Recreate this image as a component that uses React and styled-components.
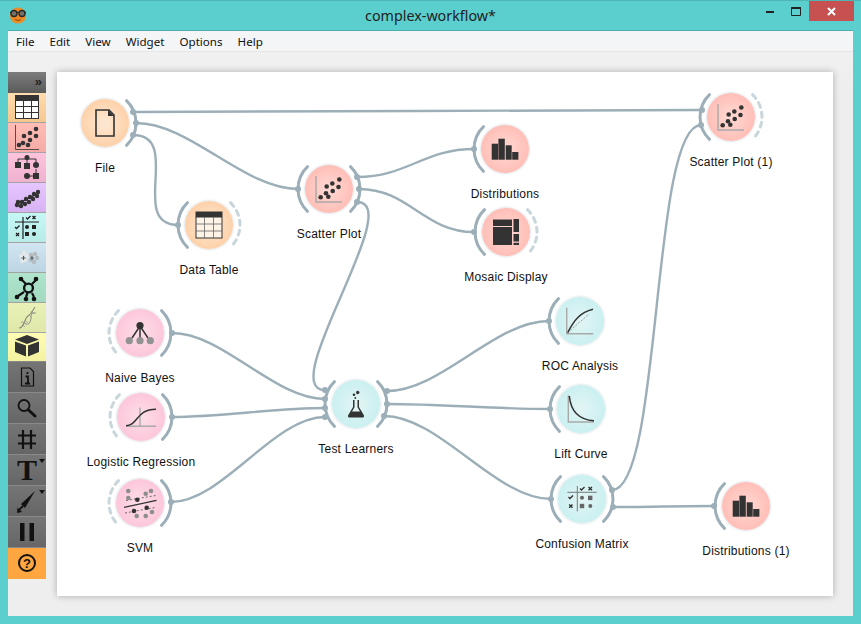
import React from 'react'
import styled, { createGlobalStyle } from 'styled-components'

const GlobalStyle = createGlobalStyle`
    html, body {
        margin: 0;
        padding: 0;
        background: #5bcfce;
    }
    * {
        box-sizing: border-box;
    }
`

const LINK = '#9cafb8'
const DASH = '#c9d6db'
const DARK = '#333333'
const GREY = '#a9a9a9'

const HUES = {
    orange: ['#fde6cf', '#fdc797'],
    red: ['#ffd6d0', '#ffb3ab'],
    pink: ['#fddbe7', '#fcbdd4'],
    cyan: ['#e0f4f4', '#c0eeee'],
}

function Dots({ points, r = 2.3, fill = DARK }) {
    return points.map(([x, y], i) => <circle key={i} cx={x} cy={y} r={r} fill={fill} />)
}

function FileGlyph() {
    return (
        <>
            <path d="M-9 -13 H4 L9 -8 V13 H-9 Z" fill="none" stroke={DARK} strokeWidth="1.6" />
            <path d="M3 -13 L9 -7 H3 Z" fill={DARK} />
        </>
    )
}

function TableGlyph() {
    return (
        <>
            <rect x="-13" y="-13" width="26" height="26" fill="#fdf3e6" stroke={DARK} strokeWidth="1" />
            <rect x="-13" y="-13" width="26" height="5.5" fill={DARK} />
            <path d="M-4.5 -8 V13 M4.5 -8 V13 M-13 -1 H13 M-13 6 H13" stroke="#666" strokeWidth="0.8" fill="none" />
        </>
    )
}

function ScatterGlyph() {
    return (
        <>
            <path d="M-13 -13 V13 H13" fill="none" stroke={GREY} strokeWidth="1.4" />
            <Dots points={[[10.3, -9.5], [3.3, -5.5], [-2.3, -2.5], [9.5, -2], [3.7, 2], [-3, 4.3], [-8.3, 8.3], [-0.7, 7.7]]} />
        </>
    )
}

function BarsGlyph() {
    return (
        <g fill={DARK}>
            <rect x="-13.3" y="-5.3" width="6.4" height="16" />
            <rect x="-6.6" y="-10.3" width="6.4" height="21" />
            <rect x="0.7" y="-3.7" width="6" height="14.4" />
            <rect x="7.2" y="3" width="6.2" height="7.7" />
        </g>
    )
}

function MosaicGlyph() {
    return (
        <g fill={DARK}>
            <rect x="-13" y="-12.5" width="19" height="6.5" />
            <rect x="-13" y="-5" width="19" height="18" />
            <rect x="7.5" y="-13" width="5.5" height="13" />
            <rect x="7.5" y="2" width="5.5" height="7.5" />
            <rect x="7.5" y="10.8" width="5.5" height="2.2" />
        </g>
    )
}

function BayesGlyph() {
    return (
        <>
            <path d="M0 -7 L-8 5 M0 -7 V5 M0 -7 L8 5" stroke={DARK} strokeWidth="1.5" fill="none" />
            <Dots points={[[0, -7.5]]} r={3.6} />
            <Dots points={[[-10.7, 7.7], [0, 7.7], [10.3, 7.7]]} r={3.6} fill="#929292" />
        </>
    )
}

function LogisticGlyph() {
    return (
        <>
            <path d="M-1 -9.5 V9.3 M-15 9.3 H15" stroke={GREY} strokeWidth="1.4" fill="none" />
            <path d="M-15 8.7 C-3 8.7 -5 -7.7 15 -7.7" stroke={DARK} strokeWidth="1.5" fill="none" />
        </>
    )
}

function SvmGlyph() {
    return (
        <>
            <path d="M-16 4.3 L16.5 -2.7" stroke={DARK} strokeWidth="1.2" />
            <path d="M-14 -2.5 L16 -7.5 M-15 10 L15 4.5" stroke={DARK} strokeWidth="0.7" strokeDasharray="2 2" />
            <Dots points={[[-11.7, -12], [-11.7, -5], [11, -12], [5.7, -9.3], [-3.3, 13], [5.7, 13], [12, 9]]} fill="#8d8d8d" />
            <Dots points={[[-2.7, -3.3], [6.7, 4.7], [-6, 8]]} />
        </>
    )
}

function FlaskGlyph() {
    return (
        <>
            <path d="M-3 -4 H3 V3 L8 11.5 Q8.5 13.5 6 13.5 H-6 Q-8.5 13.5 -8 11.5 L-3 3 Z" fill={DARK} />
            <path d="M-1.5 -4 V3.2 L-4 7.5 H4 L1.5 3.2 V-4 Z" fill="#e0f4f4" />
            <Dots points={[[1.7, -11.5]]} r={1.7} />
            <Dots points={[[-2, -9.3]]} r={1.3} />
            <Dots points={[[-0.7, -6]]} r={0.9} />
        </>
    )
}

function RocGlyph() {
    return (
        <>
            <path d="M-13.3 -13.3 V12.7 H13.3" stroke={GREY} strokeWidth="1.4" fill="none" />
            <path d="M-12.3 11.7 L9 -7" stroke="#777" strokeWidth="0.7" strokeDasharray="2 1.5" />
            <path d="M-12.3 11.7 C-6 -1 0 -8.5 13 -11.7" stroke={DARK} strokeWidth="1.5" fill="none" />
        </>
    )
}

function LiftGlyph() {
    return (
        <>
            <path d="M-12.7 -13.7 V13 H13" stroke={GREY} strokeWidth="1.4" fill="none" />
            <path d="M-11.7 -13 C-10 4 0 11 13 11.7" stroke={DARK} strokeWidth="1.5" fill="none" />
        </>
    )
}

function MatrixGlyph() {
    return (
        <>
            <path d="M-4.7 -13 V12.3 M-14.7 -6.7 H14.7" stroke="#777" strokeWidth="1" />
            <path d="M-2 -10.5 L-0.5 -9 L2.5 -12 M-13.5 -2 L-12 -0.5 L-9 -3.5" stroke={DARK} strokeWidth="1.4" fill="none" />
            <path d="M6.5 -12 L10 -8.8 M10 -12 L6.5 -8.8 M-12.8 5.5 L-9.5 8.8 M-9.5 5.5 L-12.8 8.8" stroke={DARK} strokeWidth="1.4" />
            <Dots points={[[0, -1.3], [8.3, 7]]} r={2} fill="#666" />
            <rect x="6" y="-3.3" width="4.4" height="4.4" fill="#666" />
            <rect x="-2.2" y="4.8" width="4.4" height="4.4" fill="#666" />
        </>
    )
}

const nodes = [
    { id: 'file', label: 'File', x: 105, y: 123, hue: 'orange', glyph: FileGlyph, right: 'solid' },
    { id: 'table', label: 'Data Table', x: 209, y: 225, hue: 'orange', glyph: TableGlyph, left: 'solid', right: 'dash' },
    { id: 'scatter', label: 'Scatter Plot', x: 329, y: 189, hue: 'red', glyph: ScatterGlyph, left: 'solid', right: 'solid' },
    { id: 'dist', label: 'Distributions', x: 505, y: 149, hue: 'red', glyph: BarsGlyph, left: 'solid' },
    { id: 'mosaic', label: 'Mosaic Display', x: 506, y: 232, hue: 'red', glyph: MosaicGlyph, left: 'solid', right: 'dash' },
    { id: 'scatter1', label: 'Scatter Plot (1)', x: 731, y: 117, hue: 'red', glyph: ScatterGlyph, left: 'solid', right: 'dash' },
    { id: 'bayes', label: 'Naive Bayes', x: 140, y: 333, hue: 'pink', glyph: BayesGlyph, left: 'dash', right: 'solid' },
    { id: 'logit', label: 'Logistic Regression', x: 141, y: 417, hue: 'pink', glyph: LogisticGlyph, left: 'dash', right: 'solid' },
    { id: 'svm', label: 'SVM', x: 140, y: 503, hue: 'pink', glyph: SvmGlyph, left: 'dash', right: 'solid' },
    { id: 'test', label: 'Test Learners', x: 356, y: 404, hue: 'cyan', glyph: FlaskGlyph, left: 'solid', right: 'solid' },
    { id: 'roc', label: 'ROC Analysis', x: 580, y: 321, hue: 'cyan', glyph: RocGlyph, left: 'solid' },
    { id: 'lift', label: 'Lift Curve', x: 581, y: 409, hue: 'cyan', glyph: LiftGlyph, left: 'solid' },
    { id: 'matrix', label: 'Confusion Matrix', x: 582, y: 499, hue: 'cyan', glyph: MatrixGlyph, left: 'solid', right: 'solid' },
    { id: 'dist1', label: 'Distributions (1)', x: 746, y: 506, hue: 'red', glyph: BarsGlyph, left: 'solid' },
]

// start and end anchors of each link, in page coordinates
const links = [
    [[133, 112], [702, 110]],
    [[136, 123], [298, 189]],
    [[133, 135], [178, 225]],
    [[357, 177], [474, 149]],
    [[359, 189], [474, 232]],
    [[357, 202], [325, 390]],
    [[172, 333], [325, 399]],
    [[172, 417], [325, 408]],
    [[171, 502], [325, 417]],
    [[387, 391], [549, 321]],
    [[387, 404], [550, 409]],
    [[384, 416], [551, 499]],
    [[612, 490], [701, 125]],
    [[613, 507], [714, 506]],
]

const CANVAS_X = 57
const CANVAS_Y = 72

function linkPath([x1, y1], [x2, y2]) {
    const dx = Math.max(Math.abs(x2 - x1) / 3, 50)
    return `M${x1} ${y1} C${x1 + dx} ${y1} ${x2 - dx} ${y2} ${x2} ${y2}`
}

function arcPath(cx, cy, side) {
    const r = 31
    const d = 46 * Math.PI / 180
    const sx = side === 'right' ? 1 : -1
    const px = (r * Math.cos(d) * sx).toFixed(1)
    const py = (r * Math.sin(d)).toFixed(1)
    return `M${cx + Number(px)} ${cy - py} A${r} ${r} 0 0 ${side === 'right' ? 1 : 0} ${cx + Number(px)} ${cy + Number(py)}`
}

const Frame = styled.div`
    width: 861px;
    height: 624px;
    overflow: hidden;
    display: flex;
    flex-direction: column;
    padding: 0 8px 8px;
    background: #5bcfce;
    border-top: 1px solid #4fb4b4;
    font-family: "Liberation Sans", Arial, sans-serif;
`

const TitleBar = styled.header`
    height: 29px;
    flex: none;
    display: grid;
    grid-template-columns: 1fr auto 1fr;
    align-items: start;
`

const AppLogo = styled.svg`
    width: 18px;
    height: 18px;
    margin: 5px 0 0 1px;
    display: block;
`

const Title = styled.h1`
    margin: 5px 0 0 0;
    font-family: "Noto Sans", sans-serif;
    font-size: 14.3px;
    line-height: 20px;
    font-weight: 400;
    color: #222;
`

const WindowButtons = styled.div`
    display: flex;
    justify-content: flex-end;
    align-items: flex-start;
`

const WindowButton = styled.div`
    width: ${p => p.$width}px;
    height: 20px;
    display: flex;
    align-items: center;
    justify-content: center;
    background: ${p => p.$close ? '#c75050' : 'transparent'};
    margin-right: ${p => p.$close ? -1 : 0}px;
`

const Client = styled.div`
    flex: 1;
    min-height: 0;
    display: flex;
    flex-direction: column;
    background: #eeeeee;
    border-top: 1px solid #4cadad;
`

const MenuBar = styled.nav`
    height: 21px;
    flex: none;
    display: flex;
    align-items: center;
    gap: 15px;
    padding: 0 0 0 8px;
    background: #f4f5f7;
    border-bottom: 1px solid #e6e6e8;
    font-family: "Noto Sans", sans-serif;
    font-size: 11.6px;
    color: #111;
`

const Workspace = styled.main`
    flex: 1;
    min-height: 0;
    display: flex;
    align-items: flex-start;
    gap: 11px;
    padding: 20px 20px 20px 0;
    background: linear-gradient(#f1f1f1, #eeeeee 40px);
`

const Dock = styled.aside`
    width: 38px;
    flex: none;
    display: flex;
    flex-direction: column;
`

const DockHeader = styled.div`
    height: 21px;
    display: flex;
    align-items: center;
    justify-content: flex-end;
    padding: 0 4px 3px 0;
    background: linear-gradient(#7c7c7c, #5a5a5a);
    font-size: 13px;
    font-weight: 700;
    color: #222;
`

const DockButton = styled.div`
    position: relative;
    height: ${p => p.$height || 30}px;
    display: flex;
    align-items: center;
    justify-content: center;
    background: linear-gradient(${p => p.$from}, ${p => p.$to});
    border-bottom: 1px solid ${p => p.$line || '#a3a3a3'};
    color: #111;
`

const DockIcon = styled.svg`
    width: 38px;
    height: 30px;
    display: block;
    flex: none;
`

const ToolLetter = styled.span`
    font-family: "Liberation Serif", serif;
    font-weight: 700;
    font-size: 30px;
    line-height: 30px;
    color: #111;
`

const MenuCaret = styled.span`
    position: absolute;
    top: 4px;
    right: 1px;
    width: 0;
    height: 0;
    border-left: 3px solid transparent;
    border-right: 3px solid transparent;
    border-top: 4px solid #111;
`

const HelpRing = styled.span`
    width: 18px;
    height: 18px;
    border: 2px solid #111;
    border-radius: 50%;
    display: flex;
    align-items: center;
    justify-content: center;
    font-size: 13px;
    font-weight: 700;
    color: #111;
`

const Canvas = styled.section`
    position: relative;
    width: 776px;
    height: 524px;
    flex: none;
    background: #fff;
    box-shadow: 0 0 7px rgba(0, 0, 0, 0.28);
`

const LinkLayer = styled.svg`
    position: absolute;
    inset: 0;
    width: 100%;
    height: 100%;
`

const Node = styled.figure`
    position: absolute;
    left: ${p => p.$x - CANVAS_X - 60}px;
    top: ${p => p.$y - CANVAS_Y - 24}px;
    width: 120px;
    margin: 0;
    display: flex;
    flex-direction: column;
    align-items: center;
    gap: 14px;
`

const Bubble = styled.div`
    width: 48px;
    height: 48px;
    border-radius: 50%;
    background: radial-gradient(circle, ${p => HUES[p.$hue][0]} 10%, ${p => HUES[p.$hue][1]} 100%);
    box-shadow: 0 0 2px 1px rgba(150, 170, 180, 0.28);
`

const Glyph = styled.svg`
    width: 48px;
    height: 48px;
    display: block;
`

const Caption = styled.figcaption`
    font-size: 12px;
    line-height: 14px;
    letter-spacing: 0.2px;
    color: #111;
    white-space: nowrap;
`

function Logo() {
    return (
        <AppLogo viewBox="0 0 18 18">
            <circle cx="9" cy="9.5" r="8" fill="#ee8a22" />
            <path d="M1 6.5 H17" stroke="#333" strokeWidth="1.2" />
            <circle cx="5" cy="7.5" r="3" fill="#77716a" stroke="#2a2a2a" strokeWidth="1.4" />
            <circle cx="13" cy="7.5" r="3" fill="#77716a" stroke="#2a2a2a" strokeWidth="1.4" />
            <path d="M6 13.5 Q9 15.5 12 13.5" stroke="#8a4a10" strokeWidth="1" fill="none" />
        </AppLogo>
    )
}

function DockIcons({ name }) {
    if (name === 'table') {
        return (
            <DockIcon viewBox="0 0 38 30">
                <rect x="7" y="2" width="24" height="24" fill="#333" />
                <g fill="#fff">
                    <rect x="8" y="8" width="7" height="5" />
                    <rect x="16" y="8" width="7" height="5" />
                    <rect x="24" y="8" width="6" height="5" />
                    <rect x="8" y="14" width="7" height="5" />
                    <rect x="16" y="14" width="7" height="5" />
                    <rect x="24" y="14" width="6" height="5" />
                    <rect x="8" y="20" width="7" height="5" />
                    <rect x="16" y="20" width="7" height="5" />
                    <rect x="24" y="20" width="6" height="5" />
                </g>
            </DockIcon>
        )
    }
    if (name === 'scatter') {
        return (
            <DockIcon viewBox="0 0 38 30">
                <path d="M7.5 2 V26.5 H31" stroke="#5a4a4a" strokeWidth="1" fill="none" />
                <Dots points={[[28, 6], [22, 10], [16, 13], [28, 13], [22, 17], [15, 20], [20, 22], [11, 22]]} />
            </DockIcon>
        )
    }
    if (name === 'tree') {
        return (
            <DockIcon viewBox="0 0 38 30">
                <path d="M10 10 V6 H28 V12 M19 3 V12 M28 16 V22" stroke="#333" strokeWidth="1" fill="none" />
                <Dots points={[[19, 4.5]]} r={2.5} />
                <Dots points={[[28, 12], [19, 23]]} r={3} />
                <path d="M19 23 H28" stroke="#333" strokeWidth="1" />
                <rect x="7" y="9" width="6" height="6" fill="#333" />
                <rect x="16" y="10" width="6" height="6" fill="#333" />
                <rect x="25" y="20" width="6" height="6" fill="#333" />
            </DockIcon>
        )
    }
    if (name === 'projection') {
        return (
            <DockIcon viewBox="0 0 38 30">
                <path d="M7 22 L31 10" stroke="#222" strokeWidth="1.2" />
                <Dots
                    points={[[9, 22], [10, 19], [13, 23], [14, 19], [17, 21], [18, 16], [21, 19], [22, 14], [25, 16], [26, 11], [29, 13], [30, 9]]}
                    r={2.2}
                />
            </DockIcon>
        )
    }
    if (name === 'matrix') {
        return (
            <DockIcon viewBox="0 0 38 30">
                <path d="M15 4 V26 M7 9 H31" stroke="#222" strokeWidth="1.2" />
                <path d="M18 4.5 L19.5 6 L22.5 3 M7 14 L8.5 15.5 L11.5 12.5" stroke="#222" strokeWidth="1.3" fill="none" />
                <path d="M24.5 3 L27.5 6 M27.5 3 L24.5 6 M8 20 L11 23 M11 20 L8 23" stroke="#222" strokeWidth="1.3" />
                <Dots points={[[19, 14], [26, 21]]} r={2} fill="#222" />
                <rect x="24" y="12" width="4" height="4" fill="#222" />
                <rect x="17" y="19" width="4" height="4" fill="#222" />
            </DockIcon>
        )
    }
    if (name === 'faded') {
        return (
            <DockIcon viewBox="0 0 38 30">
                <Dots points={[[13, 13], [16, 10], [19, 13], [14, 18], [17, 17]]} r={2.2} fill="#e4e7e7" />
                <Dots points={[[23, 12], [27, 11], [29, 15], [26, 19], [23, 17]]} r={2.2} fill="#b4bcc0" />
                <path d="M13.5 15 H17.5 M15.5 13 V17 M22 15 H26 M24 13 V17" stroke="#555" strokeWidth="1" />
            </DockIcon>
        )
    }
    if (name === 'network') {
        return (
            <DockIcon viewBox="0 0 38 30">
                <path d="M14 7 L18 11 M28 7 L24 11 M10 23 L16 19 M18 24 L19.5 20 M26 24 L24 20" stroke="#111" strokeWidth="2.2" />
                <circle cx="20.5" cy="15" r="4.4" fill="none" stroke="#111" strokeWidth="2.4" />
                <Dots points={[[13, 6], [28, 6], [9, 24], [18, 26], [26, 26]]} r={2.3} fill="#111" />
            </DockIcon>
        )
    }
    if (name === 'dna') {
        return (
            <DockIcon viewBox="0 0 38 30">
                <path d="M11 25 C17 25 16 15 20 13 C24 11 24 8 27 4" stroke="#8a8a7a" strokeWidth="1.1" fill="none" />
                <path d="M13 19 C18 19 19 24 22 19 C25 14 20 9 28 10" stroke="#a0a090" strokeWidth="1.1" fill="none" />
                <path d="M14 21 L17 24 M17 17 L20 20 M21 12 L24 15 M23 8 L26 11" stroke="#999" strokeWidth="0.8" />
            </DockIcon>
        )
    }
    if (name === 'cube') {
        return (
            <DockIcon viewBox="0 0 38 30">
                <path d="M19 3 L31 7.5 L19 12 L7 7.5 Z" fill="#333" />
                <path d="M7 9.5 L18 13.5 V24.5 L7 20 Z M31 9.5 L20 13.5 V24.5 L31 20 Z" fill="#333" />
            </DockIcon>
        )
    }
    if (name === 'info') {
        return (
            <DockIcon viewBox="0 0 38 30">
                <path d="M13.5 6 H22 L25.5 9.5 V24 H13.5 Z" fill="none" stroke="#111" strokeWidth="1.2" />
                <path d="M19.5 10 V12 M17.5 14.5 H20 V21 M17 21.5 H22" stroke="#111" strokeWidth="1.8" fill="none" />
            </DockIcon>
        )
    }
    if (name === 'search') {
        return (
            <DockIcon viewBox="0 0 38 30">
                <circle cx="16" cy="12.5" r="5.5" fill="none" stroke="#111" strokeWidth="1.8" />
                <path d="M20.5 17 L27 23" stroke="#111" strokeWidth="3" strokeLinecap="round" />
            </DockIcon>
        )
    }
    if (name === 'hash') {
        return (
            <DockIcon viewBox="0 0 38 30">
                <path d="M15 6 V25 M23 6 V25 M10 11.5 H28 M10 19.5 H28" stroke="#111" strokeWidth="2.2" />
            </DockIcon>
        )
    }
    if (name === 'pen') {
        return (
            <DockIcon viewBox="0 0 38 30">
                <path d="M27 5 L13 18 L17 22 Z" fill="#111" />
                <path d="M15 20 L10 25" stroke="#111" strokeWidth="1.8" />
                <path d="M9 27 L9.5 21.5 L14 26 Z" fill="#111" />
            </DockIcon>
        )
    }
    return (
        <DockIcon viewBox="0 0 38 30">
            <rect x="12" y="6" width="4.5" height="18" fill="#111" />
            <rect x="21.5" y="6" width="4.5" height="18" fill="#111" />
        </DockIcon>
    )
}

const categories = [
    ['table', '#ffdcae', '#f6c88e'],
    ['scatter', '#ffbdb5', '#f5aba6'],
    ['tree', '#ffc3dd', '#efb2cf'],
    ['projection', '#e6c6ff', '#d8b2f3'],
    ['matrix', '#c6f7f4', '#b8ece9'],
    ['faded', '#d2e6f2', '#bcd4e4'],
    ['network', '#b0e4cd', '#a2d9bf'],
    ['dna', '#e9f1b8', '#dfe8a8'],
]

function App() {
    return (
        <Frame>
            <GlobalStyle />
            <TitleBar>
                <Logo />
                <Title>complex-workflow*</Title>
                <WindowButtons>
                    <WindowButton $width={26}>
                        <svg width="9" height="3"><rect width="8" height="2" y="1" fill="#222" /></svg>
                    </WindowButton>
                    <WindowButton $width={26}>
                        <svg width="11" height="9"><path d="M0.5 1.5 H9.5 V8.5 H0.5 Z" fill="none" stroke="#222" /><rect x="0" y="0" width="10" height="2" fill="#222" /></svg>
                    </WindowButton>
                    <WindowButton $width={45} $close>
                        <svg width="9" height="9"><path d="M1 1 L8 8 M8 1 L1 8" stroke="#fff" strokeWidth="2" /></svg>
                    </WindowButton>
                </WindowButtons>
            </TitleBar>
            <Client>
                <MenuBar>
                    <span>File</span>
                    <span>Edit</span>
                    <span>View</span>
                    <span>Widget</span>
                    <span>Options</span>
                    <span>Help</span>
                </MenuBar>
                <Workspace>
                    <Dock>
                        <DockHeader>»</DockHeader>
                        {categories.map(([name, from, to]) => (
                            <DockButton key={name} $from={from} $to={to}>
                                <DockIcons name={name} />
                            </DockButton>
                        ))}
                        <DockButton $from="#fdfcb4" $to="#f5f3a0" $height={29} $line="#888">
                            <DockIcons name="cube" />
                        </DockButton>
                        <DockButton $from="#757575" $to="#666" $height={31} $line="#8a8a8a">
                            <DockIcons name="info" />
                        </DockButton>
                        <DockButton $from="#757575" $to="#666" $height={31} $line="#8a8a8a">
                            <DockIcons name="search" />
                        </DockButton>
                        <DockButton $from="#757575" $to="#666" $height={31} $line="#8a8a8a">
                            <DockIcons name="hash" />
                        </DockButton>
                        <DockButton $from="#757575" $to="#666" $height={31} $line="#8a8a8a">
                            <ToolLetter>T</ToolLetter>
                            <MenuCaret />
                        </DockButton>
                        <DockButton $from="#757575" $to="#666" $height={31} $line="#8a8a8a">
                            <DockIcons name="pen" />
                            <MenuCaret />
                        </DockButton>
                        <DockButton $from="#757575" $to="#666" $height={31} $line="#8a8a8a">
                            <DockIcons name="pause" />
                        </DockButton>
                        <DockButton $from="#ffa640" $to="#ffa640" $height={31} $line="#ffa640">
                            <HelpRing>?</HelpRing>
                        </DockButton>
                    </Dock>
                    <Canvas>
                        <LinkLayer viewBox={`${CANVAS_X} ${CANVAS_Y} 776 524`}>
                            {links.map(([a, b], i) => (
                                <g key={i}>
                                    <path d={linkPath(a, b)} fill="none" stroke={LINK} strokeWidth="2.4" />
                                    <circle cx={a[0]} cy={a[1]} r="3" fill={LINK} />
                                    <circle cx={b[0]} cy={b[1]} r="3" fill={LINK} />
                                </g>
                            ))}
                            {nodes.map(n => ['left', 'right'].filter(side => n[side]).map(side => (
                                <path
                                    key={n.id + side}
                                    d={arcPath(n.x, n.y, side)}
                                    fill="none"
                                    stroke={n[side] === 'dash' ? DASH : LINK}
                                    strokeWidth="3"
                                    strokeLinecap="round"
                                    strokeDasharray={n[side] === 'dash' ? '5 5' : undefined}
                                />
                            )))}
                        </LinkLayer>
                        {nodes.map(({ id, label, x, y, hue, glyph: NodeGlyph }) => (
                            <Node key={id} $x={x} $y={y}>
                                <Bubble $hue={hue}>
                                    <Glyph viewBox="-24 -24 48 48">
                                        <NodeGlyph />
                                    </Glyph>
                                </Bubble>
                                <Caption>{label}</Caption>
                            </Node>
                        ))}
                    </Canvas>
                </Workspace>
            </Client>
        </Frame>
    )
}

export default App
